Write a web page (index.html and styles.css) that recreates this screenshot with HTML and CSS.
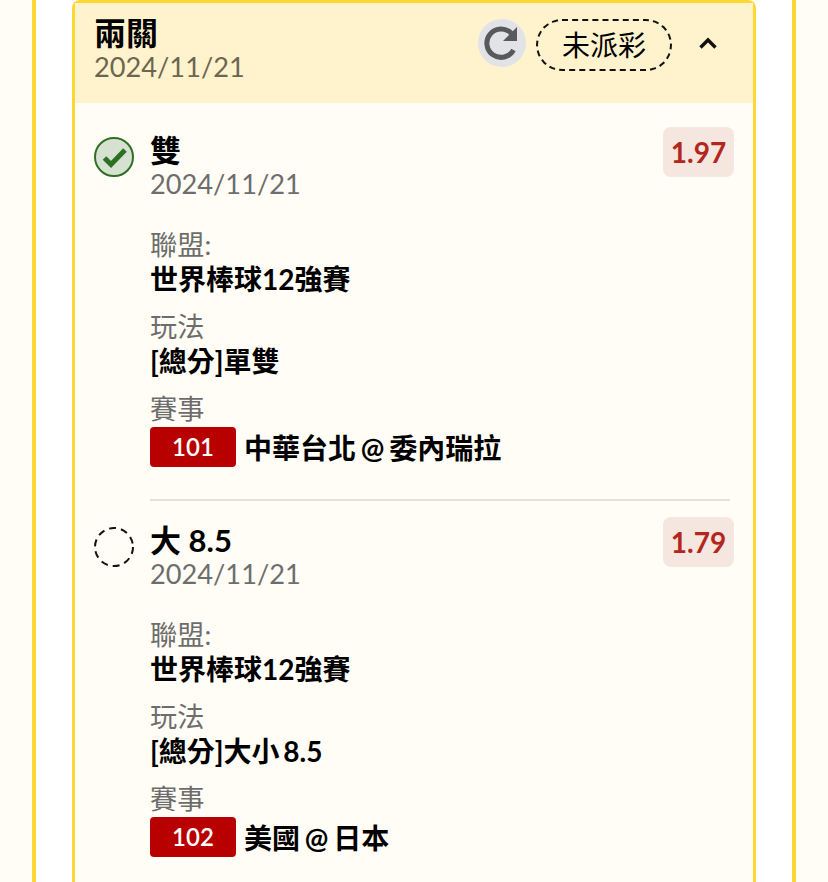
FILE: index.html
```html
<!DOCTYPE html>
<html lang="zh-Hant">
<head>
<meta charset="utf-8">
<title>兩關</title>
<link rel="stylesheet" href="styles.css">
</head>
<body>
<div class="frame">
  <section class="card">
    <header class="card-head">
      <div class="head-text">
        <div class="head-title">兩關</div>
        <div class="head-date">2024/11/21</div>
      </div>
      <div class="head-actions">
        <span class="refresh">
          <svg viewBox="0 0 48 48" width="48" height="48"><circle cx="24" cy="24" r="24" fill="#e1e3e6"/><path d="M35.5 31A14.2 14.2 0 1 1 33.5 14.5" fill="none" stroke="#58595b" stroke-width="5"/><path d="M39 8v14H25z" fill="#58595b"/></svg>
        </span>
        <span class="status">未派彩</span>
        <svg class="chevron" viewBox="0 0 20 14" width="20" height="14"><path d="M2.5 11.5 10 4l7.5 7.5" fill="none" stroke="#111" stroke-width="3.4"/></svg>
      </div>
    </header>
    <div class="legs">
      <article class="leg">
        <div class="mark">
          <svg viewBox="0 0 40 40" width="40" height="40"><circle cx="20" cy="20" r="19" fill="#d6e1d1" stroke="#2f6f24" stroke-width="2"/><path d="M10.5 21 17 27.5 31 13" fill="none" stroke="#2f6f24" stroke-width="5"/></svg>
        </div>
        <div class="leg-main">
          <div class="leg-top">
            <div>
              <div class="pick">雙</div>
              <div class="pick-date">2024/11/21</div>
            </div>
            <div class="odds">1.97</div>
          </div>
          <div class="field"><div class="label">聯盟:</div><div class="value">世界棒球12強賽</div></div>
          <div class="field"><div class="label">玩法</div><div class="value">[總分]單雙</div></div>
          <div class="field"><div class="label">賽事</div><div class="match"><span class="num">101</span><span class="teams">中華台北 @ 委內瑞拉</span></div></div>
        </div>
      </article>
      <article class="leg leg-next">
        <div class="mark">
          <svg viewBox="0 0 40 40" width="40" height="40"><circle cx="20" cy="20" r="19" fill="none" stroke="#111" stroke-width="2" stroke-dasharray="7 5"/></svg>
        </div>
        <div class="leg-main">
          <div class="leg-top">
            <div>
              <div class="pick">大 8.5</div>
              <div class="pick-date">2024/11/21</div>
            </div>
            <div class="odds">1.79</div>
          </div>
          <div class="field"><div class="label">聯盟:</div><div class="value">世界棒球12強賽</div></div>
          <div class="field"><div class="label">玩法</div><div class="value">[總分]大小 8.5</div></div>
          <div class="field"><div class="label">賽事</div><div class="match"><span class="num">102</span><span class="teams">美國 @ 日本</span></div></div>
        </div>
      </article>
    </div>
  </section>
</div>
</body>
</html>
```
FILE: styles.css
```css
html, body { margin: 0; height: 100%; overflow: hidden; background: #fffdf5; }
body { font-family: Lato, "Noto Sans CJK TC", sans-serif; color: #000; }
.frame { margin: 0 32px; height: 882px; box-sizing: border-box; border-left: 4px solid #fdd835; border-right: 4px solid #fdd835; padding: 0 36px; background: #fff; }
.card { border: 3px solid #fdd835; border-bottom: 0; border-radius: 8px 8px 0 0; height: 882px; box-sizing: border-box; background: #fffdf5; }
.card-head { display: flex; justify-content: space-between; height: 100px; box-sizing: border-box; background: #fef3cd; padding: 11px 35px 0 19px; }
.head-title { font-size: 32px; font-weight: 700; line-height: 37px; }
.head-date { font-size: 27.2px; line-height: 31px; color: #6e6551; }
.head-actions { display: flex; align-items: flex-start; padding-top: 5px; }
.refresh { display: block; width: 48px; height: 48px; margin-right: 10px; }
.refresh svg { display: block; }
.status { display: block; box-sizing: border-box; height: 52px; width: 136px; border: 2px dashed #111; border-radius: 26px; text-align: center; font-size: 28px; line-height: 48px; }
.chevron { margin: 17px 0 0 26px; }
.legs { padding: 24px 19px 0 19px; }
.leg { display: flex; }
.mark { width: 40px; flex: none; margin-right: 16px; padding-top: 10px; }
.mark svg { display: block; }
.leg-main { flex: 1; padding-bottom: 18px; border-bottom: 2px solid #e4e2da; margin-right: 4px; }
.leg-next .leg-main { border-bottom: 0; }
.leg-next { padding-top: 16px; }
.leg-top { display: flex; justify-content: space-between; margin-right: -4px; margin-bottom: 29px; }
.pick { font-size: 31px; font-weight: 700; line-height: 37px; padding-top: 5px; }
.pick-date { font-size: 27.2px; line-height: 30px; color: #6d6d6d; }
.odds { box-sizing: border-box; height: 50px; width: 71px; background: #f5e6df; border-radius: 8px; color: #b3261e; font-size: 28px; font-weight: 700; line-height: 50px; text-align: center; }
.field { margin-bottom: 14px; }
.label { font-size: 27.2px; line-height: 34px; color: #6d6d6d; }
.value { font-size: 28px; font-weight: 700; line-height: 34px; word-spacing: -3px; }
.match { display: flex; align-items: center; margin-top: 1px; }
.num { width: 86px; height: 40px; background: #b80000; color: #fff; border-radius: 4px; font-size: 24px; font-weight: 600; line-height: 40px; text-align: center; margin-right: 8px; }
.teams { font-size: 28px; font-weight: 700; word-spacing: -2px; }
```
